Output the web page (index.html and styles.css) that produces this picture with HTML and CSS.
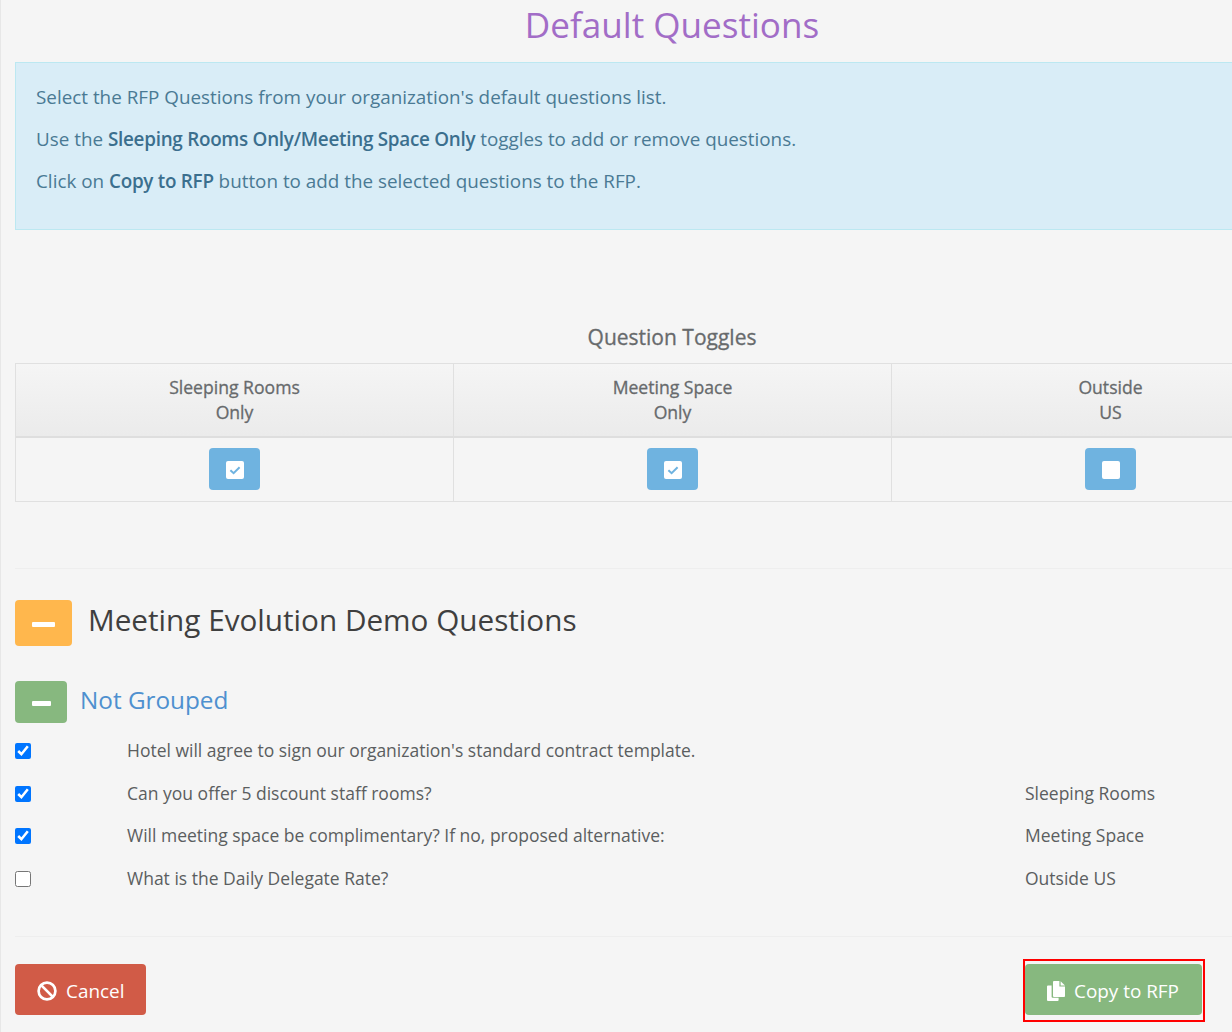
FILE: index.html
```html
<!DOCTYPE html>
<html lang="en">
<head>
<meta charset="utf-8">
<title>Default Questions</title>
<link rel="stylesheet" href="styles.css">
</head>
<body>
<main class="page">
  <h1 class="title">Default Questions</h1>
  <section class="info">
    <p>Select the RFP Questions from your organization's default questions list.</p>
    <p>Use the <b>Sleeping Rooms Only/Meeting Space Only</b> toggles to add or remove questions.</p>
    <p>Click on <b>Copy to RFP</b> button to add the selected questions to the RFP.</p>
  </section>
  <h2 class="toggles-title">Question Toggles</h2>
  <div class="toggles">
    <div class="toggle-head">Sleeping Rooms<br>Only</div>
    <div class="toggle-head">Meeting Space<br>Only</div>
    <div class="toggle-head">Outside<br>US</div>
    <div class="toggle-cell"><button class="toggle-btn" type="button"><svg class="box" viewBox="0 0 18 18"><rect width="18" height="18" rx="2" fill="#fff"/><path d="M4.4 9.2l3.2 3 6-6" fill="none" stroke="#6fb3e0" stroke-width="2"/></svg></button></div>
    <div class="toggle-cell"><button class="toggle-btn" type="button"><svg class="box" viewBox="0 0 18 18"><rect width="18" height="18" rx="2" fill="#fff"/><path d="M4.4 9.2l3.2 3 6-6" fill="none" stroke="#6fb3e0" stroke-width="2"/></svg></button></div>
    <div class="toggle-cell"><button class="toggle-btn" type="button"><svg class="box" viewBox="0 0 18 18"><rect width="18" height="18" rx="2" fill="#fff"/></svg></button></div>
  </div>
  <hr class="rule rule-one">
  <div class="group-head">
    <button class="collapse collapse-orange" type="button"><span class="dash"></span></button>
    <h3 class="group-title">Meeting Evolution Demo Questions</h3>
  </div>
  <div class="sub-head">
    <button class="collapse collapse-green" type="button"><span class="dash dash-small"></span></button>
    <h4 class="sub-title">Not Grouped</h4>
  </div>
  <div class="questions">
    <div class="question"><input type="checkbox" checked><span>Hotel will agree to sign our organization's standard contract template.</span><span></span></div>
    <div class="question"><input type="checkbox" checked><span>Can you offer 5 discount staff rooms?</span><span>Sleeping Rooms</span></div>
    <div class="question"><input type="checkbox" checked><span>Will meeting space be complimentary? If no, proposed alternative:</span><span>Meeting Space</span></div>
    <div class="question"><input type="checkbox"><span>What is the Daily Delegate Rate?</span><span>Outside US</span></div>
  </div>
  <hr class="rule rule-two">
  <div class="actions">
    <button class="btn btn-cancel" type="button"><svg class="icon-cancel" viewBox="0 0 20 20"><circle cx="10" cy="10" r="8.4" fill="none" stroke="#fff" stroke-width="2.7"/><path d="M4.4 4.4l11.2 11.2" stroke="#fff" stroke-width="2.7"/></svg>Cancel</button>
    <span class="highlight"><button class="btn btn-copy" type="button"><svg class="icon-copy" viewBox="0 0 18 20"><path d="M0 5.5a1 1 0 0 1 1-1h3.6v11.2a1 1 0 0 0 1 1h6V19a1 1 0 0 1-1 1H1a1 1 0 0 1-1-1z" fill="#fff"/><path d="M6 1a1 1 0 0 1 1-1h5.4v5.6H18v9.4a.9.9 0 0 1-.9.9H7a1 1 0 0 1-1-1z" fill="#fff"/><path d="M13.6 0.2L18 4.4h-4.4z" fill="#fff"/></svg>Copy to RFP</button></span>
  </div>
</main>
</body>
</html>
```
FILE: styles.css
```css
html, body { margin: 0; padding: 0; height: 1032px; overflow: hidden; }
body { background: #f5f5f5; color: #676a6c; font-family: "Open Sans", sans-serif; }
.page { width: 1314px; height: 1032px; padding: 0 14px; border-left: 1px solid #e7e7e7; overflow: hidden; }
.title { margin: 0; height: 62px; line-height: 48px; font-size: 35.1px; font-weight: 400; text-align: center; color: #a26dc7; }
.info { box-sizing: border-box; height: 168px; padding: 19px 20px 0; background: #d9edf7; border: 1px solid #bce8f1; color: #4a7a94; font-size: 18.85px; }
.info p { margin: 0 0 12px; line-height: 30px; }
.info b { font-weight: 600; color: #3b6f8e; letter-spacing: -0.27px; }
.toggles-title { margin: 90px 0 0; height: 43px; line-height: 34px; font-size: 21px; font-weight: 400; -webkit-text-stroke: 0.3px #676a6c; text-align: center; color: #676a6c; }
.toggles { display: grid; grid-template-columns: repeat(3, 438px); border-top: 1px solid #e0e0e0; border-left: 1px solid #e0e0e0; }
.toggle-head { box-sizing: border-box; height: 74px; padding: 11px 8px; text-align: center; font-size: 17.6px; font-weight: 400; -webkit-text-stroke: 0.3px #676a6c; line-height: 25px; color: #676a6c; background: linear-gradient(#f5f5f5, #ebebeb); border-right: 1px solid #e0e0e0; border-bottom: 2px solid #dedede; }
.toggle-cell { box-sizing: border-box; height: 64px; padding-top: 10px; text-align: center; border-right: 1px solid #e0e0e0; border-bottom: 1px solid #e0e0e0; }
.toggle-btn { box-sizing: border-box; width: 51px; height: 42px; padding: 2px 0 0; border: 0; border-radius: 4px; background: #6fb3e0; display: inline-flex; align-items: center; justify-content: center; vertical-align: top; }
.box { width: 18px; height: 18px; }
.rule { border: 0; border-top: 1px solid #eeeeee; margin: 0; }
.rule-one { margin-top: 66px; }
.group-head { display: flex; align-items: center; gap: 16px; margin-top: 31px; height: 46px; }
.collapse { box-sizing: border-box; padding: 2px 0 0; border: 0; border-radius: 4px; display: flex; align-items: center; justify-content: center; }
.collapse-orange { width: 57px; height: 46px; background: #ffb74d; }
.collapse-green { width: 52px; height: 42px; background: #87b87f; }
.dash { display: block; width: 23px; height: 5px; background: #fff; border-radius: 1px; }
.dash-small { width: 19px; }
.group-title { margin: 0 0 6px; font-size: 29.7px; font-weight: 400; color: #3f3f3f; line-height: 42px; }
.sub-head { display: flex; align-items: center; gap: 14px; margin-top: 35px; height: 42px; }
.sub-title { margin: 0 0 6px -1px; font-size: 24.3px; font-weight: 400; color: #4e90cf; }
.questions { margin-top: 7px; }
.question { display: grid; grid-template-columns: 112px 898px 1fr; align-items: center; height: 42.6px; font-size: 17.5px; color: #5b5e60; }
.question span { padding-bottom: 2px; }
.question input { width: 16px; height: 16px; margin: 0; }
.rule-two { margin-top: 36px; }
.actions { display: flex; justify-content: space-between; width: 1190px; margin-top: 27px; }
.btn { height: 51px; border: 0; border-radius: 4px; color: #fff; font: 400 18.9px "Open Sans", sans-serif; display: inline-flex; align-items: center; padding: 3px 0 0 22px; white-space: nowrap; box-sizing: border-box; }
.btn-cancel { background: #d15b47; width: 131px; }
.btn-copy { background: #87b87f; width: 177px; }
.icon-cancel { width: 20px; height: 20px; margin-right: 9px; }
.icon-copy { width: 18px; height: 20px; margin-right: 9px; }
.highlight { display: block; box-sizing: border-box; width: 182px; height: 63px; border: 2px solid #f00; padding: 3px 2px 0 0; margin-top: -5px; }
```
